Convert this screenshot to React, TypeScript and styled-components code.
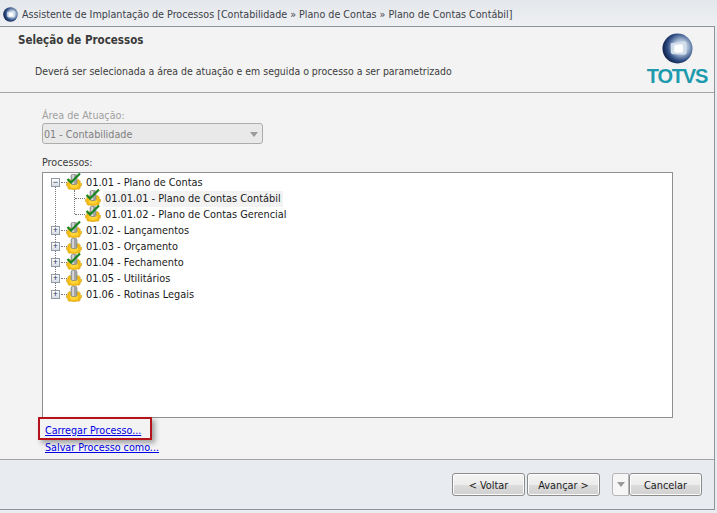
import React from 'react';
import styled, { createGlobalStyle } from 'styled-components';

const GlobalStyle = createGlobalStyle`
  html, body {
    margin: 0;
    padding: 0;
    background: #e9ecf0;
  }
  body {
    font-family: 'DejaVu Sans Condensed', 'Liberation Sans', Arial, sans-serif;
    font-size: 10.7px;
    color: #1c1c1c;
  }
`;

const Wizard = styled.div`
  display: flex;
  flex-direction: column;
  width: 717px;
  height: 513px;
  overflow: hidden;
`;

const TitleBar = styled.div`
  display: flex;
  align-items: center;
  gap: 4px;
  height: 26px;
  padding: 2px 0 0 3px;
  box-sizing: border-box;
  background: linear-gradient(#e4e7eb, #eef0f3);
  color: #3c4148;
  font-size: 10.65px;
  white-space: nowrap;
`;

const Frame = styled.div`
  display: flex;
  flex-direction: column;
  width: 715px;
  height: 484px;
  box-sizing: border-box;
  border-top: 1px solid #8e9399;
  border-right: 1px solid #8e9399;
  border-bottom: 1px solid #8e9399;
  background: #f3f3f3;
`;

const Header = styled.div`
  display: flex;
  justify-content: space-between;
  height: 66px;
  padding: 5px 7px 0 18px;
  box-sizing: border-box;
  border-bottom: 1px solid #a3a3a3;
`;

const HeaderText = styled.div`
  display: flex;
  flex-direction: column;
`;

const HeaderTitle = styled.div`
  margin-top: 1px;
  font-weight: bold;
  font-size: 11.5px;
  line-height: 14px;
  color: #3a3a3a;
`;

const HeaderHint = styled.div`
  margin: 17px 0 0 17px;
  font-size: 10.45px;
  line-height: 14px;
  color: #3c3c3c;
`;

const Logo = styled.div`
  display: flex;
  flex-direction: column;
  align-items: center;
  margin-top: 1px;
  width: 60px;
`;

const LogoName = styled.div`
  font-family: 'Liberation Sans', Arial, sans-serif;
  font-weight: bold;
  font-size: 20px;
  line-height: 18px;
  letter-spacing: -1.2px;
  color: #1d9aad;
  margin-top: 3px;
`;

const Body = styled.div`
  position: relative;
  display: flex;
  flex-direction: column;
  height: 367px;
  padding: 16px 41px 0 42px;
  box-sizing: border-box;
  border-bottom: 1px solid #a3a3a3;
`;

const FieldLabel = styled.div<{ $disabled?: boolean }>`
  line-height: 14px;
  color: ${p => (p.$disabled ? '#a0a0a0' : '#3c3c3c')};
`;

const Combo = styled.div`
  display: flex;
  align-items: center;
  justify-content: space-between;
  width: 221px;
  height: 21px;
  padding: 2px 4px 0 1px;
  box-sizing: border-box;
  border: 1px solid #adadad;
  border-radius: 3px;
  background: #e9e9e9;
  color: #7f7f7f;
`;

const DownArrow = styled.span`
  width: 0;
  height: 0;
  border-left: 4px solid transparent;
  border-right: 4px solid transparent;
  border-top: 5px solid #9a9a9a;
`;

const ProcessLabel = styled(FieldLabel)`
  margin-top: 12px;
`;

const TreeBox = styled.div`
  height: 246px;
  margin-top: 2px;
  padding-top: 1px;
  box-sizing: border-box;
  border: 1px solid #8f8f8f;
  background: #ffffff;
  font-size: 10.85px;
`;

const TreeRow = styled.div<{ $level: number }>`
  position: relative;
  display: flex;
  align-items: center;
  height: 16px;
  padding-left: ${p => (p.$level === 0 ? 8 : 42)}px;
  color: #1a1a1a;
`;

const Expander = styled.span`
  position: relative;
  z-index: 1;
  display: flex;
  align-items: center;
  justify-content: center;
  width: 9px;
  height: 9px;
  box-sizing: border-box;
  margin-right: 6px;
  border: 1px solid #8f99a8;
  background: linear-gradient(#ffffff, #d9dde4);
  color: #2b3a55;
  font-family: 'Liberation Sans', Arial, sans-serif;
  font-size: 9px;
  line-height: 7px;
`;

const VLine = styled.span<{ $left: number; $top: number; $height: number }>`
  position: absolute;
  left: ${p => p.$left}px;
  top: ${p => p.$top}px;
  height: ${p => p.$height}px;
  border-left: 1px dotted #777777;
`;

const HLine = styled.span<{ $left: number; $width: number }>`
  position: absolute;
  left: ${p => p.$left}px;
  top: 8px;
  width: ${p => p.$width}px;
  border-top: 1px dotted #777777;
`;

const NodeText = styled.span<{ $selected?: boolean }>`
  margin: 2px 0 0 2px;
  padding: 0 2px;
  line-height: 16px;
  background: ${p => (p.$selected ? '#f2f2f2' : 'transparent')};
  white-space: nowrap;
`;

const Links = styled.div`
  display: flex;
  flex-direction: column;
  align-items: flex-start;
  margin: 4px 0 0 3px;
`;

const LinkItem = styled.a`
  line-height: 17px;
  color: #0000e6;
  text-decoration: underline;
`;

const Highlight = styled.div`
  position: absolute;
  left: 38px;
  top: 324px;
  width: 114px;
  height: 23px;
  box-sizing: border-box;
  border: 2px solid #b5121b;
  box-shadow: 3px 3px 5px rgba(0, 0, 0, 0.35);
`;

const Footer = styled.div`
  display: flex;
  justify-content: flex-end;
  align-items: flex-start;
  flex: 1;
  padding: 13px 12px 0 0;
  background: #e8ebef;
`;

const WizardButton = styled.button<{ $gap?: number }>`
  width: 73px;
  height: 23px;
  margin-left: ${p => p.$gap ?? 0}px;
  padding: 2px 0 0;
  border: 1px solid #8c8c8c;
  border-radius: 3px;
  background: linear-gradient(#f4f4f4 0%, #ececec 50%, #dcdcdc 52%, #d0d0d0 100%);
  box-shadow: inset 0 0 0 1px #fbfbfb;
  color: #1c1c1c;
  font-family: inherit;
  font-size: 10.85px;
`;

const MenuButton = styled.button`
  display: flex;
  align-items: center;
  justify-content: center;
  width: 17px;
  height: 23px;
  margin-left: 12px;
  padding: 0;
  border: 1px solid #b5b5b5;
  border-radius: 3px 0 0 3px;
  background: #f6f6f6;
`;

const Gear = ({ checked }: { checked: boolean }) => (
  <svg width="16" height="18" viewBox="0 0 16 18" style={{ flex: 'none', marginTop: -3 }}>
    <path
      d="M5.6 6.5h4.8l.4 1.7 1.7-.7 2 1.7-.9 1.5 1.9.6v2.6l-1.9.6.9 1.4-1.8 1.5-1.9-.6-.4.7H5.6l-.4-.7-1.9.6-1.8-1.5.9-1.4-1.9-.6v-2.6l1.9-.6-.9-1.5 2-1.7 1.7.7z"
      fill="#f5bd14"
      stroke="#cf9a12"
      strokeWidth="0.5"
    />
    <ellipse cx="8" cy="13.2" rx="4.2" ry="2.6" fill="#ffd436" />
    <rect x="5" y="2.5" width="6" height="10" rx="1.4" fill="#a3a5a5" stroke="#7a7c7c" strokeWidth="0.6" />
    <rect x="6.2" y="3" width="1.8" height="9" fill="#d8d8d8" />
    {checked && (
      <path d="M1.5 7 5 10.5 14 1.5" fill="none" stroke="#17851f" strokeWidth="2.2" strokeLinejoin="miter" />
    )}
  </svg>
);

const TOTVSMark = ({ size }: { size: number }) => (
  <svg width={size} height={size} viewBox="0 0 32 32" style={{ flex: 'none' }}>
    <defs>
      <radialGradient id={`globe${size}`} cx="0.62" cy="0.45" r="0.62">
        <stop offset="0" stopColor="#ffffff" />
        <stop offset="0.4" stopColor="#9fb4d0" />
        <stop offset="0.75" stopColor="#2c4a80" />
        <stop offset="1" stopColor="#0d2048" />
      </radialGradient>
    </defs>
    <circle cx="16" cy="16" r="15.5" fill={`url(#globe${size})`} />
    <path d="M9 10.5 23 8.5c1.5 0 2.4 1 2.4 2.4v9c0 1.5-1 2.5-2.4 2.5l-11.5-.5C10 21.8 9 20.8 9 19.4z" fill="#d3deeb" />
    <path d="M13 12.5 20 11.5c1 0 1.6.6 1.6 1.6v5.8c0 1-.6 1.5-1.6 1.5l-6-.4c-1 0-1.6-.7-1.6-1.6z" fill="#ffffff" />
  </svg>
);

type Node = { label: string; checked: boolean };

const topNodes: Node[] = [
  { label: '01.02 - Lançamentos', checked: true },
  { label: '01.03 - Orçamento', checked: false },
  { label: '01.04 - Fechamento', checked: true },
  { label: '01.05 - Utilitários', checked: false },
  { label: '01.06 - Rotinas Legais', checked: false },
];

const App = () => {
  return (
    <Wizard>
      <GlobalStyle />
      <TitleBar>
        <TOTVSMark size={15} />
        Assistente de Implantação de Processos [Contabilidade » Plano de Contas » Plano de Contas Contábil]
      </TitleBar>
      <Frame>
        <Header>
          <HeaderText>
            <HeaderTitle>Seleção de Processos</HeaderTitle>
            <HeaderHint>Deverá ser selecionada a área de atuação e em seguida o processo a ser parametrizado</HeaderHint>
          </HeaderText>
          <Logo>
            <TOTVSMark size={31} />
            <LogoName>TOTVS</LogoName>
          </Logo>
        </Header>
        <Body>
          <FieldLabel $disabled>Área de Atuação:</FieldLabel>
          <Combo>
            01 - Contabilidade
            <DownArrow />
          </Combo>
          <ProcessLabel>Processos:</ProcessLabel>
          <TreeBox>
            <TreeRow $level={0}>
              <VLine $left={12} $top={12} $height={108} />
              <HLine $left={18} $width={6} />
              <Expander>−</Expander>
              <Gear checked />
              <NodeText>01.01 - Plano de Contas</NodeText>
            </TreeRow>
            <TreeRow $level={1}>
              <VLine $left={31} $top={0} $height={24} />
              <HLine $left={32} $width={10} />
              <Gear checked />
              <NodeText $selected>01.01.01 - Plano de Contas Contábil</NodeText>
            </TreeRow>
            <TreeRow $level={1}>
              <HLine $left={32} $width={10} />
              <Gear checked />
              <NodeText>01.01.02 - Plano de Contas Gerencial</NodeText>
            </TreeRow>
            {topNodes.map(node => (
              <TreeRow $level={0} key={node.label}>
                <HLine $left={18} $width={6} />
                <Expander>+</Expander>
                <Gear checked={node.checked} />
                <NodeText>{node.label}</NodeText>
              </TreeRow>
            ))}
          </TreeBox>
          <Links>
            <LinkItem href="#carregar">Carregar Processo...</LinkItem>
            <LinkItem href="#salvar">Salvar Processo como...</LinkItem>
          </Links>
          <Highlight />
        </Body>
        <Footer>
          <WizardButton>&lt; Voltar</WizardButton>
          <WizardButton $gap={2}>Avançar &gt;</WizardButton>
          <MenuButton>
            <DownArrow />
          </MenuButton>
          <WizardButton>Cancelar</WizardButton>
        </Footer>
      </Frame>
    </Wizard>
  );
};

export default App;
